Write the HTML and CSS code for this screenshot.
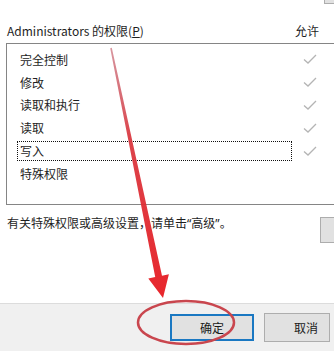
FILE: index.html
```html
<!DOCTYPE html>
<html lang="zh-CN">
<head>
<meta charset="utf-8">
<title>权限</title>
<link rel="stylesheet" href="styles.css">
</head>
<body>
<div class="page">
  <div class="topstrip"><div class="topbtn"></div></div>
  <div class="header">
    <span class="title">Administrators 的权限(<u>P</u>)</span>
    <span class="allow">允许</span>
  </div>
  <div class="list">
    <div class="row"><div class="label">完全控制</div><svg class="check" viewBox="0 0 14 10"><polyline points="1,5.5 5,9 13,1"/></svg></div>
    <div class="row"><div class="label">修改</div><svg class="check" viewBox="0 0 14 10"><polyline points="1,5.5 5,9 13,1"/></svg></div>
    <div class="row"><div class="label">读取和执行</div><svg class="check" viewBox="0 0 14 10"><polyline points="1,5.5 5,9 13,1"/></svg></div>
    <div class="row"><div class="label">读取</div><svg class="check" viewBox="0 0 14 10"><polyline points="1,5.5 5,9 13,1"/></svg></div>
    <div class="row focus"><div class="label">写入</div><svg class="check" viewBox="0 0 14 10"><polyline points="1,5.5 5,9 13,1"/></svg></div>
    <div class="row"><div class="label">特殊权限</div></div>
  </div>
  <div class="info">
    <span class="infotext">有关特殊权限或高级设置，请单击<span class="q">“</span>高级<span class="q">”</span>。</span>
    <div class="advbtn"></div>
  </div>
  <div class="spacer"></div>
  <div class="footer">
    <div class="btn ok">确定</div>
    <div class="btn cancel">取消</div>
  </div>
  <svg class="overlay" viewBox="0 0 334 351">
    <defs>
      <linearGradient id="ag" x1="0" y1="48" x2="0" y2="298" gradientUnits="userSpaceOnUse">
        <stop offset="0" stop-color="#b84050" stop-opacity="0.55"/>
        <stop offset="0.35" stop-color="#d83038" stop-opacity="0.9"/>
        <stop offset="1" stop-color="#e8262c"/>
      </linearGradient>
    </defs>
    <polygon points="110.2,48.2 111.8,47.8 162,275.7 168.9,274.3 163,298 148.3,278.5 155.2,277.1" fill="url(#ag)"/>
    <ellipse cx="186" cy="322.5" rx="48" ry="21.5" fill="none" stroke="#c9464e" stroke-width="2.5"/>
  </svg>
</div>
</body>
</html>
```
FILE: styles.css
```css
html, body {
  margin: 0;
  padding: 0;
  background: #ffffff;
}
.page {
  position: relative;
  width: 334px;
  height: 351px;
  overflow: hidden;
  display: flex;
  flex-direction: column;
  font-family: "Noto Sans CJK SC", "Noto Sans", sans-serif;
  font-size: 12px;
  line-height: 17px;
  color: #1e1e1e;
}
.topstrip {
  height: 4px;
  display: flex;
  justify-content: flex-end;
}
.topbtn {
  width: 14px;
  height: 4px;
  box-sizing: border-box;
  border: 1px solid #adadad;
  border-top: none;
  background: #e1e1e1;
  margin-right: -4px;
}
.header {
  height: 39px;
  box-sizing: border-box;
  display: flex;
  justify-content: space-between;
  align-items: flex-end;
  padding: 0 15px 4px 7px;
}
.title u {
  text-decoration: underline;
  text-underline-offset: 1px;
}
.list {
  margin-left: 6px;
  margin-right: -30px;
  height: 162px;
  box-sizing: border-box;
  border-top: 1px solid #858585;
  border-bottom: 1px solid #858585;
  border-left: 1px solid #858585;
  padding-top: 4px;
}
.row {
  height: 22.8px;
  display: flex;
  align-items: center;
}
.label {
  margin-left: 10px;
  width: 275px;
  height: 20px;
  box-sizing: border-box;
  border: 1px solid transparent;
  padding-left: 2px;
  display: flex;
  align-items: center;
}
.row.focus .label {
  border: 1px dotted #111;
}
.check {
  margin-left: 11px;
  width: 14px;
  height: 10px;
}
.check polyline {
  fill: none;
  stroke: #b4b4b4;
  stroke-width: 1.3;
}
.info {
  margin-top: 9px;
  padding-left: 7px;
  display: flex;
  justify-content: space-between;
  align-items: flex-start;
}
.q {
  font-family: "Noto Sans", sans-serif;
}
.advbtn {
  margin-top: 3px;
  width: 20px;
  height: 26px;
  box-sizing: border-box;
  border: 1px solid #adadad;
  border-right: none;
  background: #e1e1e1;
  margin-right: -6px;
}
.spacer {
  flex: 1;
}
.footer {
  height: 48px;
  box-sizing: border-box;
  background: #f0f0f0;
  border-top: 1px solid #dcdcdc;
  display: flex;
  align-items: flex-start;
  padding: 10px 0 0 170px;
  gap: 10px;
}
.btn {
  box-sizing: border-box;
  background: #e1e1e1;
  display: flex;
  align-items: center;
  justify-content: center;
  color: #1a1a1a;
}
.ok {
  width: 84px;
  height: 27px;
  border: 2px solid #1a78c2;
}
.cancel {
  width: 66px;
  height: 29px;
  margin-top: -1px;
  border: 1px solid #adadad;
  padding-left: 18px;
}
.overlay {
  position: absolute;
  left: 0;
  top: 0;
  width: 334px;
  height: 351px;
  pointer-events: none;
}
```
